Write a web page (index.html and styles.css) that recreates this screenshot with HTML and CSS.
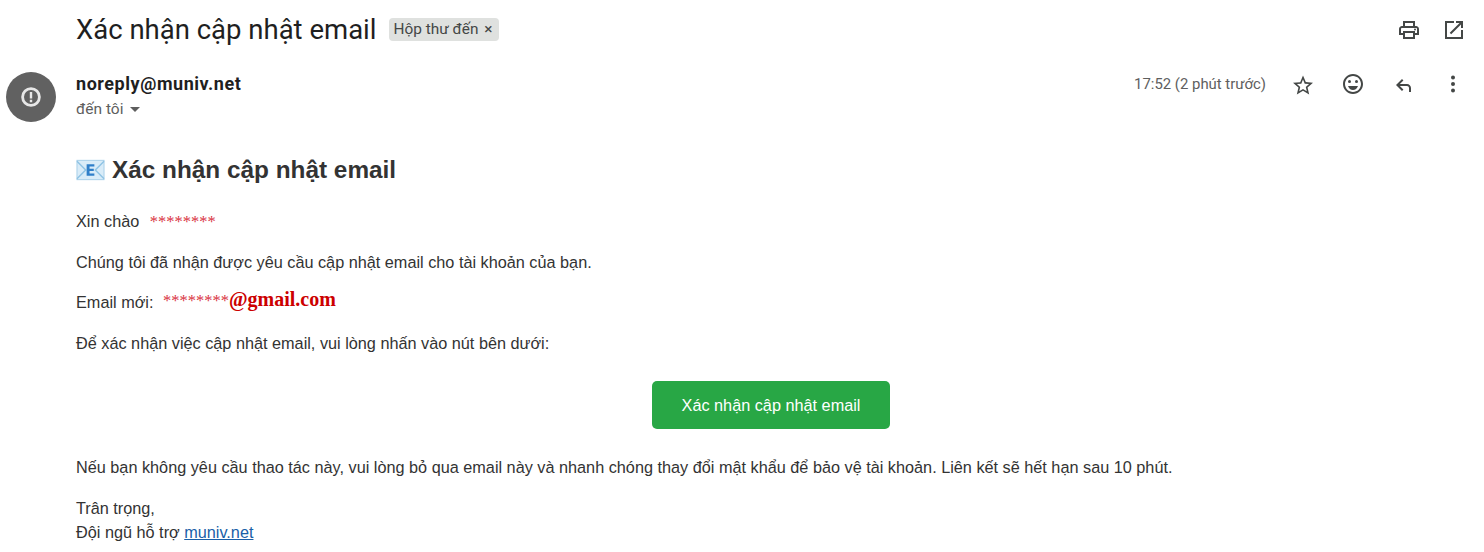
FILE: index.html
```html
<!DOCTYPE html>
<html lang="vi">

<head>
    <meta charset="UTF-8">
    <title>Xác nhận cập nhật email</title>

    <link rel="stylesheet" href="styles.css">
</head>

<body>
    <div class="subject-row">
        <h1 class="subject">Xác nhận cập nhật email</h1>
        <span class="label">Hộp thư đến <span class="label-x">×</span></span>
        <div class="subject-actions">
            <svg class="icon" viewBox="0 0 24 24"><path d="M19 8h-1V3H6v5H5c-1.66 0-3 1.34-3 3v6h4v4h12v-4h4v-6c0-1.66-1.34-3-3-3zM8 5h8v3H8V5zm8 14H8v-4h8v4zm4-4h-2v-2H6v2H4v-4c0-.55.45-1 1-1h14c.55 0 1 .45 1 1v4z"/><circle cx="18" cy="11.5" r="1"/></svg>
            <svg class="icon" viewBox="0 0 24 24"><path d="M19 19H5V5h7V3H3v18h18v-9h-2v7zM14 3v2h3.59l-9.83 9.83 1.41 1.41L19 6.41V10h2V3h-7z"/></svg>
        </div>
    </div>

    <div class="sender-row">
        <div class="avatar">
            <svg viewBox="0 0 24 24"><circle cx="12" cy="12" r="8.4" fill="none" stroke="#fff" stroke-opacity=".85" stroke-width="2.8"/><path d="M10.8 7h2.4v6.5h-2.4zM10.8 14.8h2.4v2.4h-2.4z" fill="#fff" fill-opacity=".85"/></svg>
        </div>
        <div class="sender-info">
            <div class="sender-name">noreply@muniv.net</div>
            <div class="sender-to">đến tôi <span class="caret"></span></div>
        </div>
        <div class="sender-meta">
            <span class="time">17:52 (2 phút trước)</span>
            <svg class="icon" viewBox="0 -1.5 24 24"><path d="M22 9.24l-7.19-.62L12 2 9.19 8.63 2 9.24l5.46 4.73L5.82 21 12 17.27 18.18 21l-1.63-7.03L22 9.24zM12 15.4l-3.76 2.27 1-4.28-3.32-2.88 4.38-.38L12 6.1l1.71 4.04 4.38.38-3.32 2.88 1 4.28L12 15.4z"/></svg>
            <svg class="icon" viewBox="0 0 24 24"><circle cx="15.5" cy="9.5" r="1.5"/><circle cx="8.5" cy="9.5" r="1.5"/><path d="M12 2C6.47 2 2 6.47 2 12s4.47 10 10 10 10-4.47 10-10S17.53 2 12 2zm0 18c-4.42 0-8-3.58-8-8s3.58-8 8-8 8 3.58 8 8-3.58 8-8 8zm-5-6c.78 2.34 2.72 4 5 4s4.22-1.66 5-4H7z"/></svg>
            <svg class="icon" viewBox="0 -1 24 24"><path d="M20 19v-4c0-2.21-1.79-4-4-4H8.83l3.58-3.59L11 6l-6 6 6 6 1.41-1.41L8.83 13H16c1.1 0 2 .9 2 2v4h2z"/></svg>
            <svg class="icon" viewBox="0 0 24 24"><circle cx="12" cy="5.5" r="2"/><circle cx="12" cy="12" r="2"/><circle cx="12" cy="18.5" r="2"/></svg>
        </div>
    </div>

    <div class="mail-body">
        <h2 class="mail-title">
            <svg class="mail-emoji" viewBox="0 0 30 24"><rect x="1" y="2" width="28" height="20" fill="#d9ecf8" stroke="#a6cfe8"/><path d="M1 3l9 9-9 9M29 3l-9 9 9 9" fill="none" stroke="#8fc3e4" stroke-width="1.5"/><path d="M11 6h8v2.5h-5v2.2h4.4v2.4H14v2.4h5V18h-8z" fill="#2f7fc9"/></svg>
            Xác nhận cập nhật email
        </h2>
        <p class="hello">Xin chào <span class="mask-name">********</span></p>
        <p>Chúng tôi đã nhận được yêu cầu cập nhật email cho tài khoản của bạn.</p>
        <p class="new-email">Email mới: <span class="mask-email"><span class="mask-stars">********</span>@gmail.com</span></p>
        <p>Để xác nhận việc cập nhật email, vui lòng nhấn vào nút bên dưới:</p>
        <div class="button-wrap">
            <a class="confirm-btn" href="#">Xác nhận cập nhật email</a>
        </div>
        <p>Nếu bạn không yêu cầu thao tác này, vui lòng bỏ qua email này và nhanh chóng thay đổi mật khẩu để bảo vệ tài khoản. Liên kết sẽ hết hạn sau 10 phút.</p>
        <p class="sign">Trân trọng,<br>Đội ngũ hỗ trợ <a href="#">muniv.net</a></p>
    </div>
</body>

</html>
```

FILE: styles.css
```css
body {
    font-family: "Liberation Sans", Arial, sans-serif;
    background-color: #fff;
    color: #333;
    margin: 0;
    height: 552px;
    overflow: hidden;
}

.icon {
    width: 24px;
    height: 24px;
    fill: #444746;
    flex: none;
}

.subject-row {
    display: flex;
    align-items: center;
    height: 59px;
    padding: 0 18px 0 76px;
}

.subject {
    font-family: Roboto, sans-serif;
    font-size: 27.5px;
    font-weight: 400;
    color: #1f1f1f;
    margin: 0;
}

.label {
    font-family: Roboto, sans-serif;
    font-size: 15.4px;
    line-height: 23px;
    color: #444746;
    background-color: #dfe1df;
    border-radius: 4px;
    padding: 0 7px 0 4px;
    margin-left: 13px;
}

.label-x {
    margin-left: 2px;
}

.subject-actions {
    display: flex;
    gap: 21px;
    margin-left: auto;
    margin-top: 1px;
}

.sender-row {
    display: flex;
    padding: 13px 19px 0 6px;
}

.avatar {
    width: 50px;
    height: 50px;
    border-radius: 50%;
    background-color: #616161;
    display: flex;
    align-items: center;
    justify-content: center;
}

.avatar svg {
    width: 24px;
    height: 24px;
}

.sender-info {
    margin-left: 20px;
    font-family: Roboto, sans-serif;
}

.sender-name {
    font-size: 18px;
    font-weight: 700;
    letter-spacing: 0.55px;
    color: #1f1f1f;
    line-height: 24px;
    margin-bottom: 1px;
}

.sender-to {
    font-size: 15.5px;
    color: #5e5e5e;
    line-height: 24px;
}

.caret {
    display: inline-block;
    width: 0;
    height: 0;
    border: 5px solid transparent;
    border-top-color: #5e5e5e;
    border-bottom-width: 0;
    margin-left: 3px;
    vertical-align: middle;
}

.sender-meta {
    display: flex;
    align-items: center;
    gap: 26px;
    margin-left: auto;
    height: 24px;
}

.time {
    font-family: Roboto, sans-serif;
    font-size: 14.9px;
    color: #5e5e5e;
    margin-right: -1px;
}

.mail-body {
    padding: 34px 18px 0 76px;
    font-size: 16.25px;
    line-height: 24.5px;
}

.mail-body p {
    margin: 0 0 16px;
}

.mail-title {
    display: flex;
    align-items: center;
    gap: 7px;
    font-size: 24.35px;
    line-height: 28px;
    margin: 0 0 25px;
}

.mail-emoji {
    width: 29px;
    height: 24px;
}

.mask-name {
    font-family: "Liberation Serif", serif;
    font-size: 16.5px;
    line-height: 1;
    color: #d9333f;
    margin-left: 6px;
}

.mask-email {
    font-family: "Liberation Serif", serif;
    font-size: 20px;
    line-height: 1;
    font-weight: 700;
    color: #cc0000;
    margin-left: 5px;
    position: relative;
    top: -2px;
}

.mask-stars {
    font-size: 16.5px;
    font-weight: 400;
    color: #d9333f;
}

.button-wrap {
    display: flex;
    justify-content: center;
    margin: 26px 0 26px;
}

.confirm-btn {
    background-color: #28a745;
    color: #fff;
    text-decoration: none;
    line-height: 24px;
    padding: 12px 30px;
    border-radius: 5px;
}

.sign a {
    color: #1a5fa8;
}
```
